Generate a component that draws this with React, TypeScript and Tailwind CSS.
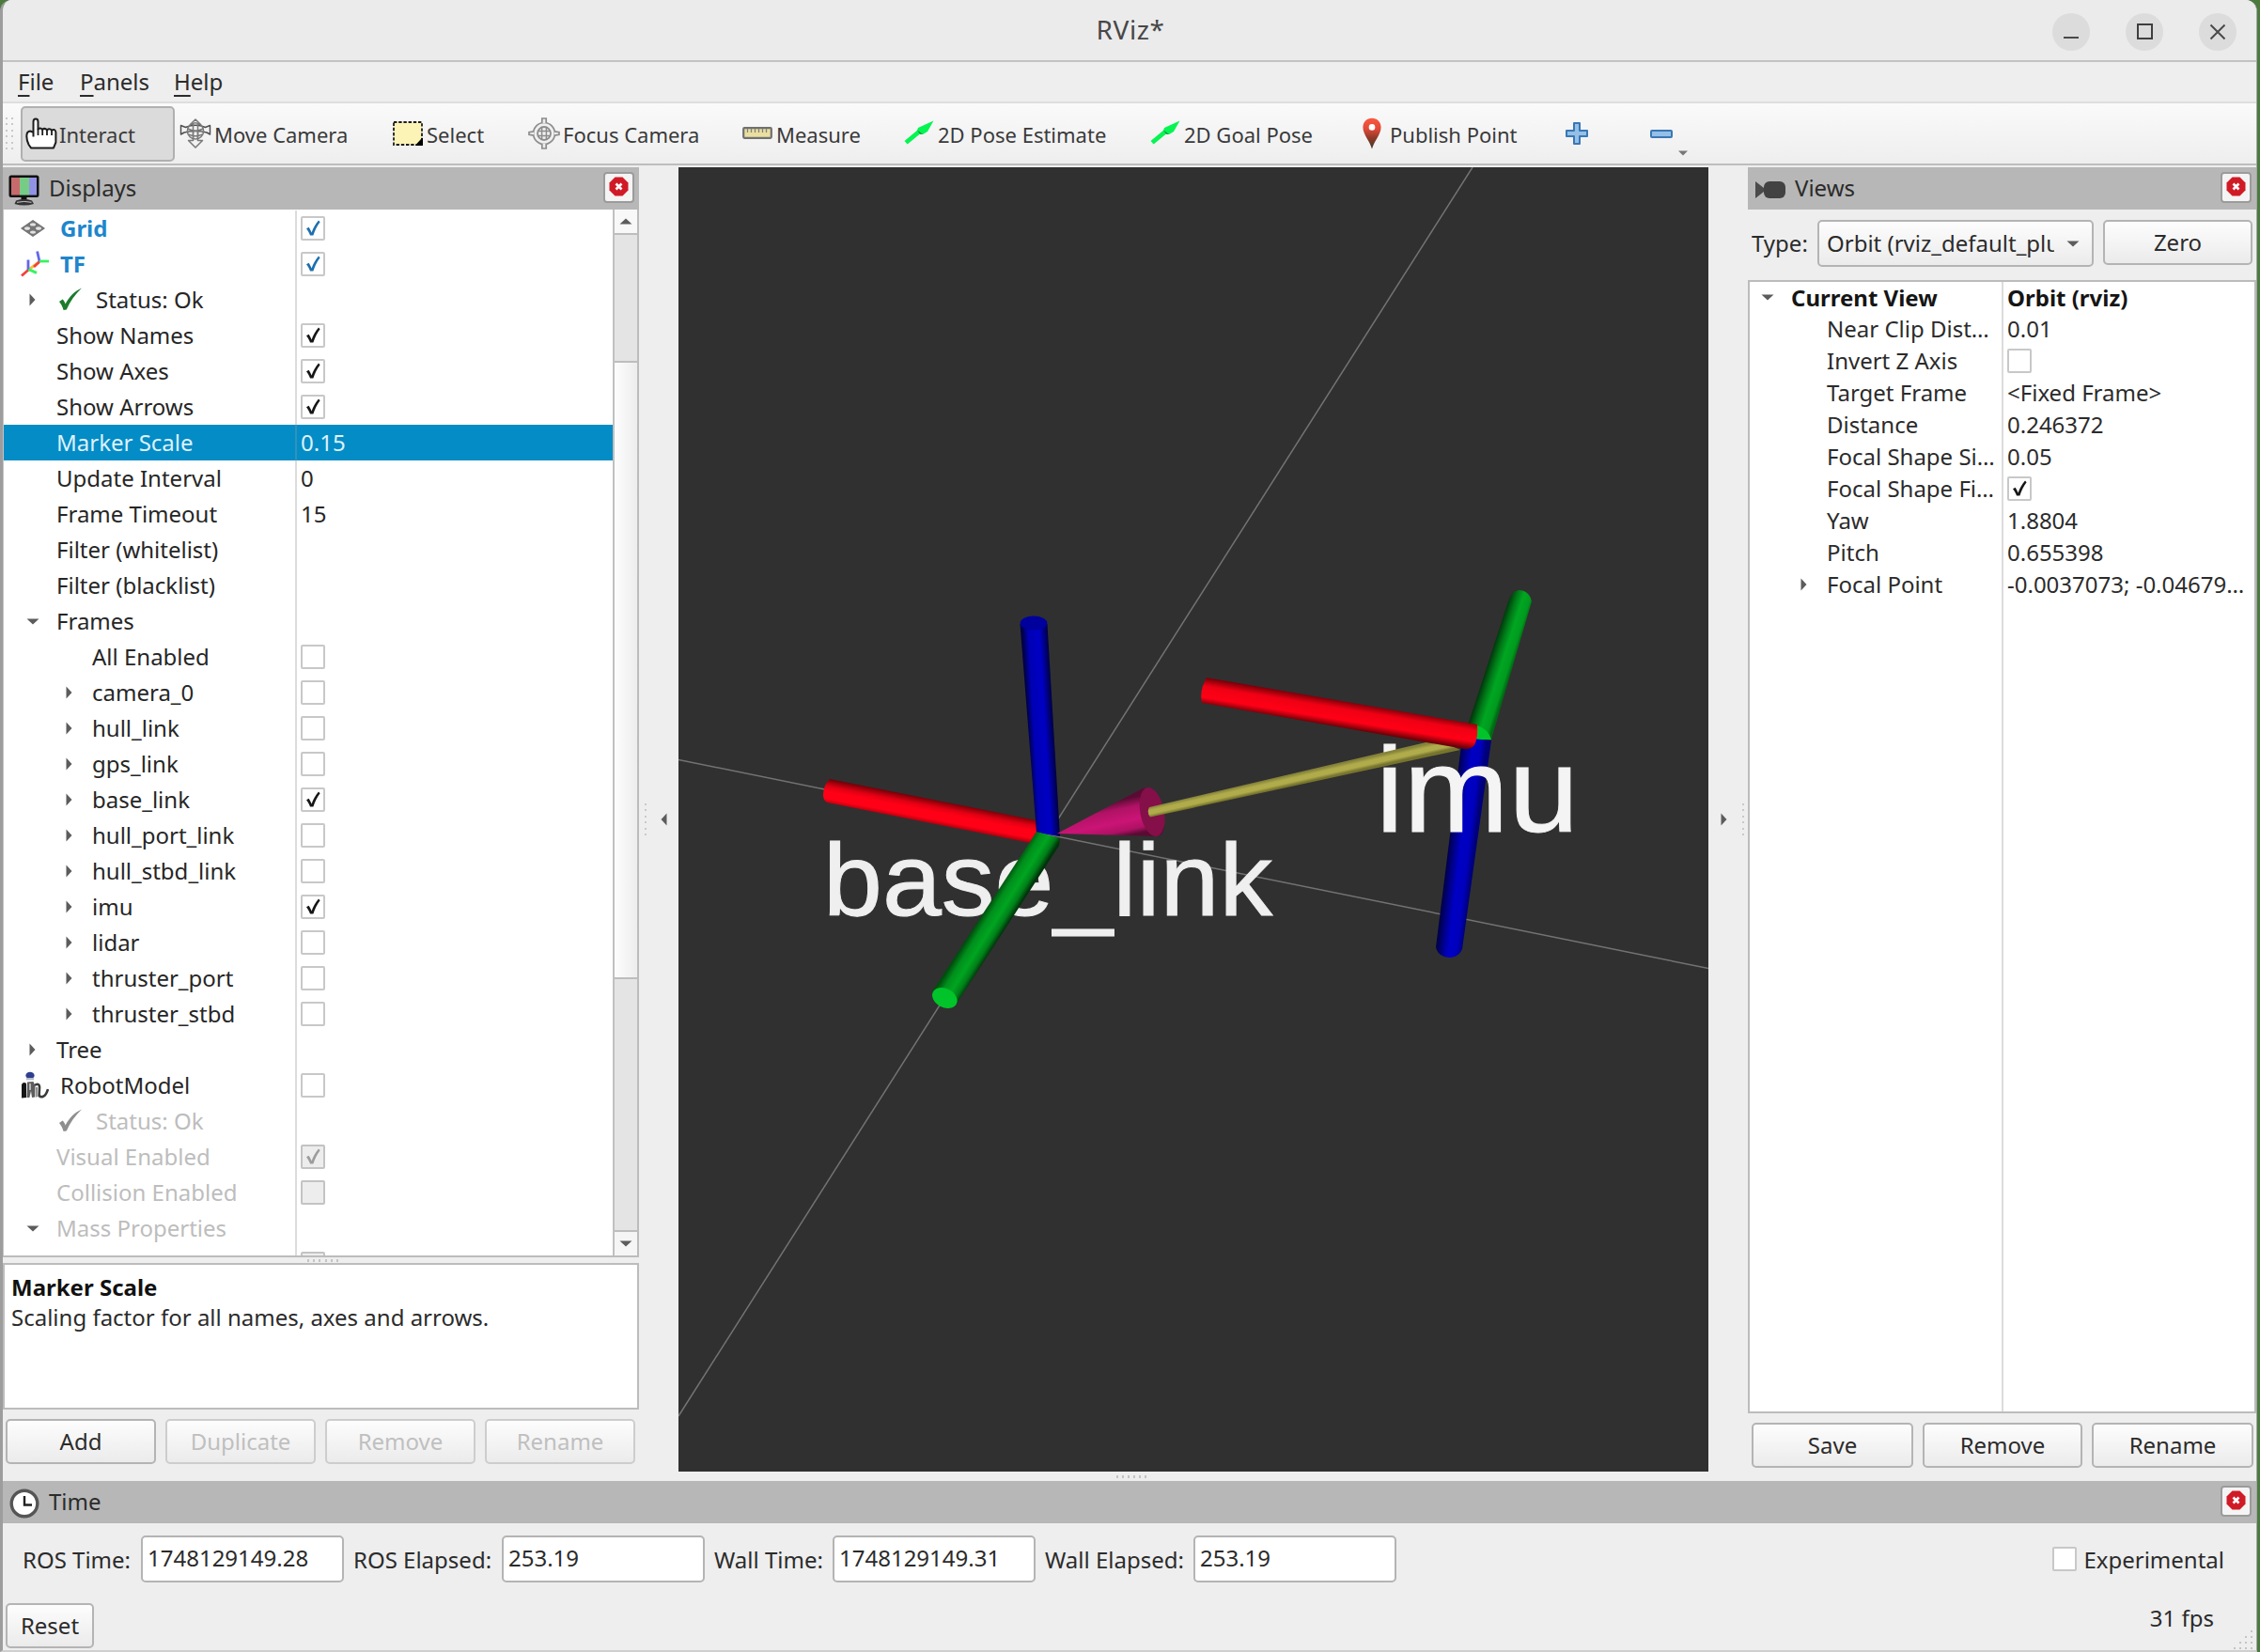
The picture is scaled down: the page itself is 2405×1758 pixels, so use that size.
import React from "react";

type Mark = "on" | "off" | "blue" | "onDisabled" | "offDisabled";

function CheckBox({ mark }: { mark: Mark }) {
  const disabled = mark === "onDisabled" || mark === "offDisabled";
  const checked = mark === "on" || mark === "blue" || mark === "onDisabled";
  const stroke = mark === "blue" ? "#1d6fae" : mark === "on" ? "#161616" : "#9c9c9c";
  return (
    <div
      className={
        "h-[26px] w-[26px] shrink-0 rounded-[2px] border-2 " +
        (disabled ? "border-[#c3c3c3] bg-[#ededed]" : "border-[#c8c8c8] bg-white")
      }
    >
      {checked && (
        <svg width="22" height="22" viewBox="0 0 22 22" fill={stroke}>
          <path d="M4 11.2 L6.6 9.8 C8 12 8.8 13.6 9.6 15.6 C11.2 10.6 13.6 6.6 17 2.6 L18.6 4.2 C15.4 8.6 13 13.2 11.4 18.6 L8 18.6 C7 15.6 5.8 13.4 4 11.2 Z" />
        </svg>
      )}
    </div>
  );
}

function ArrowRight() {
  return (
    <svg width="7" height="14" viewBox="0 0 7 14" className="shrink-0">
      <path d="M0.5 0.5 L6.5 7 L0.5 13.5 Z" fill="#5c5c5c" />
    </svg>
  );
}

function ArrowDown({ className = "" }: { className?: string }) {
  return (
    <svg width="14" height="7" viewBox="0 0 14 7" className={"shrink-0 " + className}>
      <path d="M0.5 0.5 H13.5 L7 6.5 Z" fill="#5c5c5c" />
    </svg>
  );
}

function StatusCheck({ muted = false }: { muted?: boolean }) {
  return (
    <svg width="26" height="26" viewBox="0 0 26 26" className="shrink-0">
      <path
        d="M1 15 L4.6 12.6 C6 14 7 15.6 7.6 17.6 C12 9.6 17 4 25 0.6 C18 7.4 12.4 15 8.8 23.6 L5.6 24 C4.6 20.4 3 17.4 1 15 Z"
        fill={muted ? "#8f8f8f" : "#1c7c2c"}
      />
    </svg>
  );
}

function GridIcon() {
  return (
    <svg width="26" height="18" viewBox="0 0 26 18" className="shrink-0">
      <path d="M13 0.8 L25 9 L13 17.2 L1 9 Z" fill="#767676" stroke="#767676" strokeWidth="1.4" strokeLinejoin="round" />
      <g fill="#e2e2e2">
        <ellipse cx="13" cy="4.9" rx="3" ry="1.7" />
        <ellipse cx="13" cy="13.1" rx="3" ry="1.7" />
        <ellipse cx="7" cy="9" rx="3" ry="1.8" />
        <ellipse cx="19" cy="9" rx="3" ry="1.8" />
      </g>
    </svg>
  );
}

function TfIcon() {
  return (
    <svg width="30" height="28" viewBox="0 0 30 28" className="shrink-0" fill="none" strokeWidth="2.8">
      <path d="M8.4 20 L20 11.5" stroke="#f6c13c" />
      <path d="M14 17 L20 11.5" stroke="#f4403c" />
      <path d="M1 26.5 L8.4 20" stroke="#f4403c" />
      <path d="M8 20 V9.5" stroke="#6464ee" />
      <path d="M20 11 L17.6 0.5" stroke="#6464ee" />
      <path d="M20 11 H30" stroke="#35f55e" />
      <path d="M8.4 19.6 L17 23.4" stroke="#35f55e" />
    </svg>
  );
}

function RobotIcon() {
  return (
    <svg width="30" height="30" viewBox="0 0 30 30" className="shrink-0">
      <ellipse cx="10" cy="4.4" rx="4.6" ry="3.6" fill="#2f3f8f" />
      <path d="M6 7 h8 v2.4 h-8z" fill="#b9bcc8" />
      <path d="M1 14 Q3 10.5 6 13 L6 28 L1 28.4 Z" fill="#151515" />
      <path d="M7 11.5 L13.5 11 L15.5 16 L15 27.5 L12 28 L11 21 L9.4 28 L6.6 28 Z" fill="#5d5d5d" />
      <path d="M9 13 L11 13 L11 20 L9 20 Z" fill="#b5b5b5" />
      <path d="M15 15 C18 12.5 20.5 14 20 18 L19.6 26 C22 28.6 26.5 27.4 29 19" fill="none" stroke="#3a3a3a" strokeWidth="2.6" />
      <path d="M17 17 L16.6 27.5" stroke="#8b8b8b" strokeWidth="2" />
    </svg>
  );
}

type Row = {
  label: string;
  mark?: Mark;
  value?: string;
  kind?: "top" | "status" | "prop" | "sub";
  icon?: React.ReactNode;
  arrow?: "right" | "down";
  tone?: "blue" | "muted";
  selected?: boolean;
};

const displayRows: Row[] = [
  { label: "Grid", mark: "blue", kind: "top", icon: <GridIcon />, tone: "blue" },
  { label: "TF", mark: "blue", kind: "top", icon: <TfIcon />, tone: "blue" },
  { label: "Status: Ok", kind: "status", arrow: "right" },
  { label: "Show Names", mark: "on" },
  { label: "Show Axes", mark: "on" },
  { label: "Show Arrows", mark: "on" },
  { label: "Marker Scale", value: "0.15", selected: true },
  { label: "Update Interval", value: "0" },
  { label: "Frame Timeout", value: "15" },
  { label: "Filter (whitelist)" },
  { label: "Filter (blacklist)" },
  { label: "Frames", arrow: "down" },
  { label: "All Enabled", mark: "off", kind: "sub" },
  { label: "camera_0", mark: "off", kind: "sub", arrow: "right" },
  { label: "hull_link", mark: "off", kind: "sub", arrow: "right" },
  { label: "gps_link", mark: "off", kind: "sub", arrow: "right" },
  { label: "base_link", mark: "on", kind: "sub", arrow: "right" },
  { label: "hull_port_link", mark: "off", kind: "sub", arrow: "right" },
  { label: "hull_stbd_link", mark: "off", kind: "sub", arrow: "right" },
  { label: "imu", mark: "on", kind: "sub", arrow: "right" },
  { label: "lidar", mark: "off", kind: "sub", arrow: "right" },
  { label: "thruster_port", mark: "off", kind: "sub", arrow: "right" },
  { label: "thruster_stbd", mark: "off", kind: "sub", arrow: "right" },
  { label: "Tree", arrow: "right" },
  { label: "RobotModel", mark: "off", kind: "top", icon: <RobotIcon /> },
  { label: "Status: Ok", kind: "status", tone: "muted" },
  { label: "Visual Enabled", mark: "onDisabled", tone: "muted" },
  { label: "Collision Enabled", mark: "offDisabled", tone: "muted" },
  { label: "Mass Properties", arrow: "down", tone: "muted" },
  { label: "", mark: "offDisabled" },
];

function DisplayRow({ row }: { row: Row }) {
  const kind = row.kind ?? "prop";
  const color = row.selected
    ? "text-[#dff1fa]"
    : row.tone === "blue"
      ? "font-bold text-[#1e86cc]"
      : row.tone === "muted"
        ? "text-[#bdbdbd]"
        : "text-[#262626]";
  const lead =
    kind === "top"
      ? "w-[60px] pl-[18px]"
      : kind === "sub"
        ? "w-[94px] justify-center pl-[44px]"
        : "w-[56px] justify-center pl-[5px]";
  return (
    <div className={"flex h-[38px] shrink-0 " + (row.selected ? "bg-[#048cc6]" : "")}>
      <div
        className={
          "flex w-[312px] shrink-0 items-center border-r-2 " +
          (row.selected ? "border-[#2f93bd]" : "border-[#dcdcdc]")
        }
      >
        <div className={"flex shrink-0 items-center " + lead}>
          {row.icon}
          {row.arrow === "right" && <ArrowRight />}
          {row.arrow === "down" && <ArrowDown />}
        </div>
        {kind === "status" && (
          <div className="w-[42px] shrink-0 pl-[2px]">
            <StatusCheck muted={row.tone === "muted"} />
          </div>
        )}
        <span className={color}>{row.label}</span>
      </div>
      <div className={"flex items-center pl-[4px] " + color}>
        {row.mark && <CheckBox mark={row.mark} />}
        {row.value}
      </div>
    </div>
  );
}

function CloseButton() {
  return (
    <div className="flex h-[33px] w-[33px] shrink-0 items-center justify-center rounded-[4px] border-2 border-[#9b9b9b] bg-[#f4f4f4]">
      <svg width="21" height="21" viewBox="0 0 21 21" className="mb-[2px]">
        <path d="M6.5 0.5 H14.5 L20.5 6.5 V14.5 L14.5 20.5 H6.5 L0.5 14.5 V6.5 Z" fill="#d01b26" />
        <path d="M7.5 7.5 L13.5 13.5 M13.5 7.5 L7.5 13.5" stroke="#fff" strokeWidth="2.6" />
      </svg>
    </div>
  );
}

function PanelHeader({ icon, title }: { icon: React.ReactNode; title: string }) {
  return (
    <div className="flex h-[45px] shrink-0 items-center justify-between bg-[#b7b7b7] pr-[5px] text-[#2b2b2b]">
      <div className="flex items-center">
        {icon}
        <span className="pb-px">{title}</span>
      </div>
      <div className="mb-[3px]">
        <CloseButton />
      </div>
    </div>
  );
}

function PushButton({ label, className = "", muted = false }: { label: string; className?: string; muted?: boolean }) {
  return (
    <div
      className={
        "flex h-[48px] items-center justify-center rounded-[5px] border-2 bg-linear-to-b from-[#fdfdfd] to-[#ebebeb] " +
        (muted ? "border-[#cdcdcd] text-[#bfbfbf] " : "border-[#b4b4b4] text-[#2b2b2b] ") +
        className
      }
    >
      {label}
    </div>
  );
}

function MonitorIcon() {
  return (
    <svg width="33" height="33" viewBox="0 0 33 33" className="mt-[3px] ml-[6px] mr-[10px] shrink-0">
      <rect x="1.5" y="1.5" width="30" height="21.5" rx="1.5" fill="#111" stroke="#111" strokeWidth="2" />
      <rect x="3" y="3" width="9" height="18.6" fill="#c76a6c" />
      <rect x="12" y="3" width="10" height="18.6" fill="#77cc85" />
      <rect x="22" y="3" width="8" height="18.6" fill="#9292e4" />
      <path d="M13.5 24 h6 v3 h-6z" fill="#111" />
      <path d="M8 27.5 Q16.5 24.6 25 27.5 L27 31 Q16.5 34 6.5 31 Z" fill="#333" />
      <path d="M9 29.3 Q16.5 27.6 24.5 29.3" stroke="#c8c8c8" strokeWidth="1" fill="none" />
    </svg>
  );
}

function CameraIcon() {
  return (
    <svg width="33" height="22" viewBox="0 0 33 22" className="mt-[3px] ml-[8px] mr-[9px] shrink-0">
      <path d="M0 2 L9 9 V13 L0 20 Z" fill="#4a4a4a" />
      <rect x="9" y="2" width="23" height="18" rx="6" fill="#424242" />
    </svg>
  );
}

function ClockIcon() {
  return (
    <svg width="32" height="32" viewBox="0 0 32 32" className="mt-[3px] ml-[7px] mr-[10px] shrink-0">
      <circle cx="16" cy="16" r="13.8" fill="#fff" stroke="#555" strokeWidth="3.4" />
      <path d="M16 8 V17.5 H24" fill="none" stroke="#222" strokeWidth="2.4" />
    </svg>
  );
}

function HandIcon() {
  return (
    <svg width="34" height="34" viewBox="0 0 34 34" className="shrink-0">
      <path
        d="M8.5 20.5 V4.5 Q8.5 1.5 11 1.5 Q13.5 1.5 13.5 4.5 V12.5 Q16 10.4 18 12.8 Q20.8 10.6 23 13.4 Q25.6 11 28 13.6 Q31.6 11.6 32.4 15.6 V26.5 L30 32.4 H6 L3.6 29 Q0.6 23 1.6 17.6 Q2.4 14.6 5.6 14.6 L8.5 16"
        fill="#fff"
        stroke="#1d1d1d"
        strokeWidth="2"
        strokeLinejoin="round"
      />
      <path d="M13.5 12 V19 M18.2 13 V19 M23 13.4 V19 M28 13.6 V19" stroke="#1d1d1d" strokeWidth="1.8" />
    </svg>
  );
}

function MoveIcon() {
  return (
    <svg width="34" height="34" viewBox="0 0 34 34" className="shrink-0" fill="none" stroke="#7a7a7a" strokeWidth="1.5" strokeLinejoin="round">
      <path d="M17 2 L22.5 7.5 H19.5 V24.5 H24.5 L17 32 L9.5 24.5 H14.5 V7.5 H11.5 Z" fill="#f2f2f2" />
      <path d="M1.5 8.5 L6.5 10.5 Q17 6 27.5 10.5 L32.5 8.5 V18 L29 16 Q17 13 5 16 L1.5 18 Z" fill="#f2f2f2" stroke="#505050" />
      <circle cx="17" cy="14.4" r="8.6" />
      <path d="M8.8 12 Q17 16.5 25.2 12 M9.4 18 Q17 21.5 24.6 18 M14.5 6 V23 M19.5 6 V23" />
    </svg>
  );
}

function SelectIcon() {
  return (
    <svg width="32" height="26" viewBox="0 0 32 26" className="shrink-0">
      <rect x="1" y="1" width="30" height="24" fill="#fbf4b6" stroke="#1c1c1c" strokeWidth="1.8" strokeDasharray="3.4 1.8" />
      <path d="M31.5 18 V25.5 H24.5 Z" fill="#000" stroke="#000" />
    </svg>
  );
}

function FocusIcon() {
  return (
    <svg width="34" height="34" viewBox="0 0 34 34" className="shrink-0" fill="none" stroke="#8d8d8d" strokeWidth="1.7">
      <circle cx="17" cy="17" r="11.5" fill="#f0f0f0" />
      <circle cx="17" cy="17" r="7" strokeWidth="1.8" />
      <path d="M10 14.6 H24 M10 19.4 H24 M14.6 10 V24 M19.4 10 V24" strokeWidth="1.5" />
      <path
        d="M14.8 6 V1 H19.2 V6 M14.8 28 V33 H19.2 V28 M6 14.8 L1 15.6 V18.4 L6 19.2 M28 14.8 L33 15.6 V18.4 L28 19.2"
        fill="#ededed"
      />
    </svg>
  );
}

function RulerIcon() {
  return (
    <svg width="32" height="13" viewBox="0 0 32 13" className="mb-[2px] shrink-0">
      <rect x="1.2" y="1.2" width="29.6" height="10.6" rx="1" fill="#eadf9f" stroke="#707070" strokeWidth="2.2" />
      <path d="M5.5 2 V6 M9.5 2 V6 M13.5 2 V6 M17.5 2 V6 M21.5 2 V6 M25.5 2 V6" stroke="#808080" strokeWidth="1.3" />
    </svg>
  );
}

function PoseIcon() {
  return (
    <svg width="32" height="26" viewBox="0 0 32 26" className="mb-[2px] shrink-0">
      <path d="M31.5 0.5 L25 12 L20 15 L17 14.6 L3.6 25.6 L0.5 22 L14 10.8 L15 8 Z" fill="#05f552" />
      <path d="M14 10.5 L20 15 L17 14.6 Z" fill="#0c7f34" />
    </svg>
  );
}

function PinIcon() {
  return (
    <svg width="20" height="34" viewBox="0 0 20 34" className="shrink-0">
      <defs>
        <linearGradient id="pin" x1="0" y1="0" x2="0" y2="1">
          <stop offset="0" stopColor="#fb5a41" />
          <stop offset="0.35" stopColor="#e04a38" />
          <stop offset="0.65" stopColor="#8e3a28" />
          <stop offset="1" stopColor="#3d3a2a" />
        </linearGradient>
      </defs>
      <path d="M10 0.8 C15.6 0.8 19.6 4.8 19.6 10.6 C19.6 18 13 24 10 33.4 C7 24 0.4 18 0.4 10.6 C0.4 4.8 4.4 0.8 10 0.8 Z" fill="url(#pin)" />
      <circle cx="10" cy="10.4" r="3.3" fill="#fff" />
    </svg>
  );
}

function Tool({ icon, label, className = "" }: { icon: React.ReactNode; label: string; className?: string }) {
  return (
    <div className={"flex h-[59px] shrink-0 items-center " + className}>
      {icon}
      <span className="whitespace-nowrap pt-px">{label}</span>
    </div>
  );
}

function Viewport() {
  return (
    <svg width="1096" height="1388" viewBox="722 178 1096 1388" className="block shrink-0 bg-[#303030]">
      <defs>
        <linearGradient id="bRed" gradientUnits="userSpaceOnUse" x1="992" y1="850" x2="987" y2="876">
          <stop offset="0" stopColor="#6d0007" />
          <stop offset="0.3" stopColor="#e00013" />
          <stop offset="0.5" stopColor="#ff0016" />
          <stop offset="0.8" stopColor="#ff0016" />
          <stop offset="1" stopColor="#a8000e" />
        </linearGradient>
        <linearGradient id="iRed" gradientUnits="userSpaceOnUse" x1="1425" y1="745" x2="1420.4" y2="773">
          <stop offset="0" stopColor="#7a0009" />
          <stop offset="0.3" stopColor="#f00014" />
          <stop offset="0.72" stopColor="#ff0016" />
          <stop offset="1" stopColor="#6d0007" />
        </linearGradient>
        <linearGradient id="bBlue" gradientUnits="userSpaceOnUse" x1="1094" y1="775" x2="1121.5" y2="773.4">
          <stop offset="0" stopColor="#000046" />
          <stop offset="0.22" stopColor="#0000b4" />
          <stop offset="0.65" stopColor="#0000c4" />
          <stop offset="1" stopColor="#00003c" />
        </linearGradient>
        <linearGradient id="iBlue" gradientUnits="userSpaceOnUse" x1="1539" y1="900" x2="1569" y2="903.5">
          <stop offset="0" stopColor="#000030" />
          <stop offset="0.3" stopColor="#00008c" />
          <stop offset="0.52" stopColor="#0000c6" />
          <stop offset="0.8" stopColor="#0000bc" />
          <stop offset="1" stopColor="#000078" />
        </linearGradient>
        <linearGradient id="bGreen" gradientUnits="userSpaceOnUse" x1="1048" y1="969" x2="1072" y2="984">
          <stop offset="0" stopColor="#004d0e" />
          <stop offset="0.25" stopColor="#008f1c" />
          <stop offset="0.55" stopColor="#00a520" />
          <stop offset="0.8" stopColor="#008019" />
          <stop offset="1" stopColor="#00330a" />
        </linearGradient>
        <linearGradient id="iGreen" gradientUnits="userSpaceOnUse" x1="1584" y1="703" x2="1609" y2="711">
          <stop offset="0" stopColor="#00330a" />
          <stop offset="0.3" stopColor="#007a18" />
          <stop offset="0.55" stopColor="#00a622" />
          <stop offset="0.85" stopColor="#009a1e" />
          <stop offset="1" stopColor="#006814" />
        </linearGradient>
        <linearGradient id="cone" gradientUnits="userSpaceOnUse" x1="1188" y1="852" x2="1196" y2="890">
          <stop offset="0" stopColor="#5a0b33" />
          <stop offset="0.25" stopColor="#b01265" />
          <stop offset="0.6" stopColor="#cb1476" />
          <stop offset="0.85" stopColor="#ae1164" />
          <stop offset="1" stopColor="#5a0b33" />
        </linearGradient>
        <linearGradient id="shaft" gradientUnits="userSpaceOnUse" x1="1385" y1="822" x2="1387.4" y2="832.6">
          <stop offset="0" stopColor="#85823a" />
          <stop offset="0.35" stopColor="#b0ac4b" />
          <stop offset="0.7" stopColor="#b0ac4b" />
          <stop offset="1" stopColor="#77742f" />
        </linearGradient>
      </defs>
      <g stroke="#8a8a8a" strokeWidth="1.5" opacity="0.75">
        <path d="M722 808.5 L1818 1030.5" />
        <path d="M1567 178 L722 1507" />
      </g>
      <path d="M883 829 L1108 874 L1106 899 L880 854 Q875.6 851 876 845 Q877 834 883 829 Z" fill="url(#bRed)" />
      <path d="M1085.5 664 L1103 886 L1128 890 L1114.5 664 Z" fill="url(#bBlue)" />
      <ellipse cx="1100" cy="663" rx="14.4" ry="7.6" fill="#00009c" />
      <text x="876" y="974" fontFamily="Liberation Sans, Arial, sans-serif" fontSize="110" fill="#efefef" stroke="#efefef" strokeWidth="1" textLength="478" lengthAdjust="spacingAndGlyphs">
        base_link
      </text>
      <path d="M1103 885 L1128 892 L1127 900 L1018 1068 L992 1055 Z" fill="url(#bGreen)" />
      <ellipse cx="1005.3" cy="1062" rx="14" ry="10" transform="rotate(27 1005.3 1062)" fill="#00c42a" />
      <path d="M1125 887 L1216 839 Q1226 836 1234 850 Q1242 868 1238 884 Q1236 890 1230 890 Z" fill="url(#cone)" />
      <ellipse cx="1226" cy="864" rx="12.6" ry="26.4" transform="rotate(-11 1226 864)" fill="#850f49" />
      <path d="M1605 640 L1562 772 L1587 787 L1630 640 Q1627 628 1616 628 Q1609 629 1605 640 Z" fill="url(#iGreen)" />
      <path d="M1572 772 Q1584 776 1587 787 L1570 787 Z" fill="#00c42a" />
      <path d="M1556 785 L1587 788 L1556 1010 Q1552 1019 1542 1019 Q1530 1018 1528 1008 Z" fill="url(#iBlue)" />
      <text x="1464" y="885" fontFamily="Liberation Sans, Arial, sans-serif" fontSize="128" fill="#f4f4f4" stroke="#f4f4f4" strokeWidth="1" textLength="216" lengthAdjust="spacingAndGlyphs">
        imu
      </text>
      <path d="M1223 859 Q1220 864 1224 869.6 L1554 798 L1530 787 Z" fill="url(#shaft)" />
      <path d="M1284 721 L1572 771 Q1573 785 1569 793 Q1565 798 1558 797 L1279 748 Q1276 735 1284 721 Z" fill="url(#iRed)" />
    </svg>
  );
}

const viewRows: { label: string; value?: string; mark?: Mark; bold?: boolean; arrow?: "right" | "down" }[] = [
  { label: "Current View", value: "Orbit (rviz)", bold: true, arrow: "down" },
  { label: "Near Clip Dist…", value: "0.01" },
  { label: "Invert Z Axis", mark: "off" },
  { label: "Target Frame", value: "<Fixed Frame>" },
  { label: "Distance", value: "0.246372" },
  { label: "Focal Shape Si…", value: "0.05" },
  { label: "Focal Shape Fi…", mark: "on" },
  { label: "Yaw", value: "1.8804" },
  { label: "Pitch", value: "0.655398" },
  { label: "Focal Point", value: "-0.0037073; -0.04679…", arrow: "right" },
];

function VerticalDots() {
  return (
    <div className="flex h-[34px] flex-col justify-between">
      {[0, 1, 2, 3, 4, 5].map((i) => (
        <div key={i} className="h-[2px] w-[2px] bg-[#c9c9c9]" />
      ))}
    </div>
  );
}

function HorizontalDots() {
  return (
    <div className="flex w-[33px] justify-between">
      {[0, 1, 2, 3, 4, 5].map((i) => (
        <div key={i} className="h-[3px] w-[2px] bg-[#c4c4c4]" />
      ))}
    </div>
  );
}

function TimeField({ label, value, labelWidth }: { label: string; value: string; labelWidth: string }) {
  return (
    <div className="flex shrink-0 items-center">
      <span className={"shrink-0 whitespace-nowrap pt-[2px] " + labelWidth}>{label}</span>
      <div className="flex h-[50px] w-[216px] items-center rounded-[5px] border-2 border-[#b4b4b4] bg-white pb-px pl-[5px]">{value}</div>
    </div>
  );
}

export default function App() {
  return (
    <div className="h-[1758px] w-[2405px] overflow-hidden bg-[#4c7a3e] font-['Noto_Sans',sans-serif] text-[24px] leading-none text-[#2b2b2b]">
      <div className="flex h-[1758px] w-[2402px] flex-col overflow-hidden rounded-t-[12px] border-b-2 border-l-[3px] border-r border-b-[#cfcfcf] border-l-[#9d9d9d] border-r-[#a4a4a4] bg-[#eeeeee]">
        {/* Title bar */}
        <div className="flex h-[66px] shrink-0 items-center border-b-2 border-[#c2c2c2] bg-[#ebebeb]">
          <div className="w-[242px]" />
          <div className="flex-1 pb-[3px] text-center text-[28px] tracking-[0.6px] text-[#474747]">RViz*</div>
          <div className="flex w-[240px] gap-[38px] pl-[23px] pt-[3px]">
            <div className="flex h-[40px] w-[40px] items-center justify-center rounded-full bg-[#dcdcdc]">
              <div className="mt-[12px] h-[2px] w-[16px] bg-[#4a4a4a]" />
            </div>
            <div className="flex h-[40px] w-[40px] items-center justify-center rounded-full bg-[#dcdcdc]">
              <div className="h-[17px] w-[17px] border-2 border-[#3f3f3f]" />
            </div>
            <div className="flex h-[40px] w-[40px] items-center justify-center rounded-full bg-[#dcdcdc]">
              <svg width="18" height="18" viewBox="0 0 18 18">
                <path d="M1.5 1.5 L16.5 16.5 M16.5 1.5 L1.5 16.5" stroke="#4a4a4a" strokeWidth="2" />
              </svg>
            </div>
          </div>
        </div>

        {/* Menu bar */}
        <div className="flex h-[44px] shrink-0 items-center border-b-2 border-[#dedede] pb-px pl-[16px] text-[24px]">
          <span className="w-[66px]"><span className="underline decoration-2 underline-offset-[5px]">F</span>ile</span>
          <span className="w-[100px]"><span className="underline decoration-2 underline-offset-[5px]">P</span>anels</span>
          <span><span className="underline decoration-2 underline-offset-[5px]">H</span>elp</span>
        </div>

        {/* Tool bar */}
        <div className="flex h-[66px] shrink-0 items-center border-b-2 border-[#bdbdbd] bg-linear-to-b from-[#fafafa] to-[#eeeeee] text-[22px] text-[#3a3a3a]">
          <div className="flex w-[19px] shrink-0 gap-[4px] pl-[3px]">
            <VerticalDots />
            <VerticalDots />
          </div>
          <Tool icon={<HandIcon />} label="Interact" className="w-[164px] gap-[2px] rounded-[5px] border-2 border-[#b0b0b0] bg-[#dbdbdb] pl-[3px]" />
          <Tool icon={<MoveIcon />} label="Move Camera" className="w-[229px] gap-[3px] pl-[5px]" />
          <Tool icon={<SelectIcon />} label="Select" className="w-[146px] gap-[4px] pl-[3px]" />
          <Tool icon={<FocusIcon />} label="Focus Camera" className="w-[227px] gap-[3px] pl-px" />
          <Tool icon={<RulerIcon />} label="Measure" className="w-[172px] gap-[4px] pl-[2px]" />
          <Tool icon={<PoseIcon />} label="2D Pose Estimate" className="w-[262px] gap-[4px] pl-[2px]" />
          <Tool icon={<PoseIcon />} label="2D Goal Pose" className="w-[226px] gap-[4px] pl-[2px]" />
          <Tool icon={<PinIcon />} label="Publish Point" className="w-[218px] gap-[9px] pl-[2px]" />
          <svg width="24" height="24" viewBox="0 0 24 24" className="mr-[66px] shrink-0">
            <path d="M9 1 H15 V9 H23 V15 H15 V23 H9 V15 H1 V9 H9 Z" fill="#94c0e8" stroke="#3a77b5" strokeWidth="2" strokeLinejoin="round" />
          </svg>
          <svg width="24" height="9" viewBox="0 0 24 9" className="shrink-0">
            <rect x="1" y="1" width="22" height="7" rx="1" fill="#94c0e8" stroke="#3a77b5" strokeWidth="2" />
          </svg>
          <svg width="10" height="6" viewBox="0 0 10 6" className="mt-[42px] ml-[6px] shrink-0">
            <path d="M0 0.5 H10 L5 5.5 Z" fill="#777" />
          </svg>
        </div>

        {/* Work area */}
        <div className="mt-[2px] flex h-[1388px] shrink-0">
          {/* Displays panel */}
          <div className="flex w-[677px] shrink-0 flex-col">
            <PanelHeader icon={<MonitorIcon />} title="Displays" />
            <div className="flex h-[1115px] shrink-0 border-b-2 border-r-2 border-[#bcbcbc] bg-white">
              <div className="flex h-[1113px] w-[649px] flex-col overflow-hidden border-l border-[#c4c4c4] pt-px">
                {displayRows.map((row, i) => (
                  <DisplayRow key={i} row={row} />
                ))}
              </div>
              <div className="flex w-[26px] flex-col border-l-2 border-[#c0c0c0]">
                <div className="flex h-[25px] items-center justify-center bg-[#f8f8f8]">
                  <ArrowDown className="rotate-180" />
                </div>
                <div className="h-[136px] border-t-2 border-[#bdbdbd] bg-[#e4e4e4]" />
                <div className="h-[656px] border-t-2 border-[#bdbdbd] bg-linear-to-r from-[#fdfdfd] to-[#ededed]" />
                <div className="h-[271px] border-y-2 border-[#bdbdbd] bg-[#e4e4e4]" />
                <div className="flex flex-1 items-center justify-center bg-[#f5f5f5]">
                  <ArrowDown />
                </div>
              </div>
            </div>
            <div className="flex h-[6px] items-center justify-center pl-[4px]">
              <HorizontalDots />
            </div>
            <div className="h-[156px] shrink-0 border-2 border-[#bcbcbc] bg-white pl-[7px] pt-[8px] leading-[32px]">
              <div className="font-bold text-[#111111]">Marker Scale</div>
              <div>Scaling factor for all names, axes and arrows.</div>
            </div>
            <div className="mt-[10px] flex gap-[10px] pl-[3px]">
              <PushButton label="Add" className="w-[160px]" />
              <PushButton label="Duplicate" className="w-[160px]" muted />
              <PushButton label="Remove" className="w-[160px]" muted />
              <PushButton label="Rename" className="w-[160px]" muted />
            </div>
          </div>

          <div className="flex w-[42px] shrink-0 items-center gap-[15px] pl-[6px]">
            <VerticalDots />
            <div className="rotate-180"><ArrowRight /></div>
          </div>

          <Viewport />

          <div className="flex w-[42px] shrink-0 items-center gap-[16px] pl-[13px]">
            <ArrowRight />
            <VerticalDots />
          </div>

          {/* Views panel */}
          <div className="flex flex-1 flex-col">
            <PanelHeader icon={<CameraIcon />} title="Views" />
            <div className="flex h-[75px] shrink-0 items-start pl-[4px] pt-[11px]">
              <span className="w-[70px] shrink-0 leading-[50px]">Type:</span>
              <div className="flex h-[50px] w-[294px] shrink-0 items-center rounded-[5px] border-2 border-[#b4b4b4] bg-linear-to-b from-[#fdfdfd] to-[#ebebeb] pl-[8px]">
                <span className="w-[242px] overflow-hidden whitespace-nowrap leading-[40px]">Orbit (rviz_default_plugins)</span>
                <ArrowDown className="ml-[13px]" />
              </div>
              <PushButton label="Zero" className="ml-[10px] w-[159px] shrink-0" />
            </div>
            <div className="flex h-[1206px] shrink-0 flex-col border-2 border-[#bcbcbc] bg-white">
              {viewRows.map((row) => (
                <div key={row.label} className={"flex shrink-0 " + (row.bold ? "h-[33px] font-bold text-[#151515]" : "h-[34px]")}>
                  <div className="flex w-[270px] shrink-0 items-center border-r-2 border-[#dcdcdc]">
                    <div className={"flex shrink-0 items-center " + (row.bold ? "w-[44px] pl-[12px]" : "w-[82px] pl-[54px]")}>
                      {row.arrow === "right" && <ArrowRight />}
                      {row.arrow === "down" && <ArrowDown />}
                    </div>
                    <span className="whitespace-nowrap">{row.label}</span>
                  </div>
                  <div className="flex items-center whitespace-nowrap pl-[4px]">
                    {row.mark && <CheckBox mark={row.mark} />}
                    {row.value}
                  </div>
                </div>
              ))}
              <div className="w-[270px] flex-1 border-r-2 border-[#dcdcdc]" />
            </div>
            <div className="mt-[10px] flex gap-[10px] pl-[4px]">
              <PushButton label="Save" className="w-[172px]" />
              <PushButton label="Remove" className="w-[170px]" />
              <PushButton label="Rename" className="w-[172px]" />
            </div>
          </div>
        </div>

        <div className="flex h-[10px] shrink-0 items-center justify-center pl-[4px]">
          <HorizontalDots />
        </div>

        {/* Time panel */}
        <PanelHeader icon={<ClockIcon />} title="Time" />
        <div className="flex h-[77px] shrink-0 items-center justify-between pb-[2px] pl-[21px] pr-[34px]">
          <div className="flex gap-[10px]">
            <TimeField label="ROS Time:" value="1748129149.28" labelWidth="w-[126px]" />
            <TimeField label="ROS Elapsed:" value="253.19" labelWidth="w-[158px]" />
            <TimeField label="Wall Time:" value="1748129149.31" labelWidth="w-[126px]" />
            <TimeField label="Wall Elapsed:" value="253.19" labelWidth="w-[158px]" />
          </div>
          <div className="flex items-center gap-[7px]">
            <CheckBox mark="off" />
            <span className="pt-[2px]">Experimental</span>
          </div>
        </div>
        <div className="flex flex-1 items-start pl-[3px] pt-[8px]">
          <PushButton label="Reset" className="w-[94px]" />
          <div className="flex-1" />
          <span className="pt-[4px]">31 fps</span>
          <svg width="22" height="22" viewBox="0 0 22 22" className="mt-[28px] mr-[3px] ml-[20px]" fill="#c4c4c4">
            <path d="M19 1h2v2h-2z M13 7h2v2h-2z M19 7h2v2h-2z M7 13h2v2h-2z M13 13h2v2h-2z M19 13h2v2h-2z M1 19h2v2h-2z M7 19h2v2h-2z M13 19h2v2h-2z M19 19h2v2h-2z" />
          </svg>
        </div>
      </div>
    </div>
  );
}
